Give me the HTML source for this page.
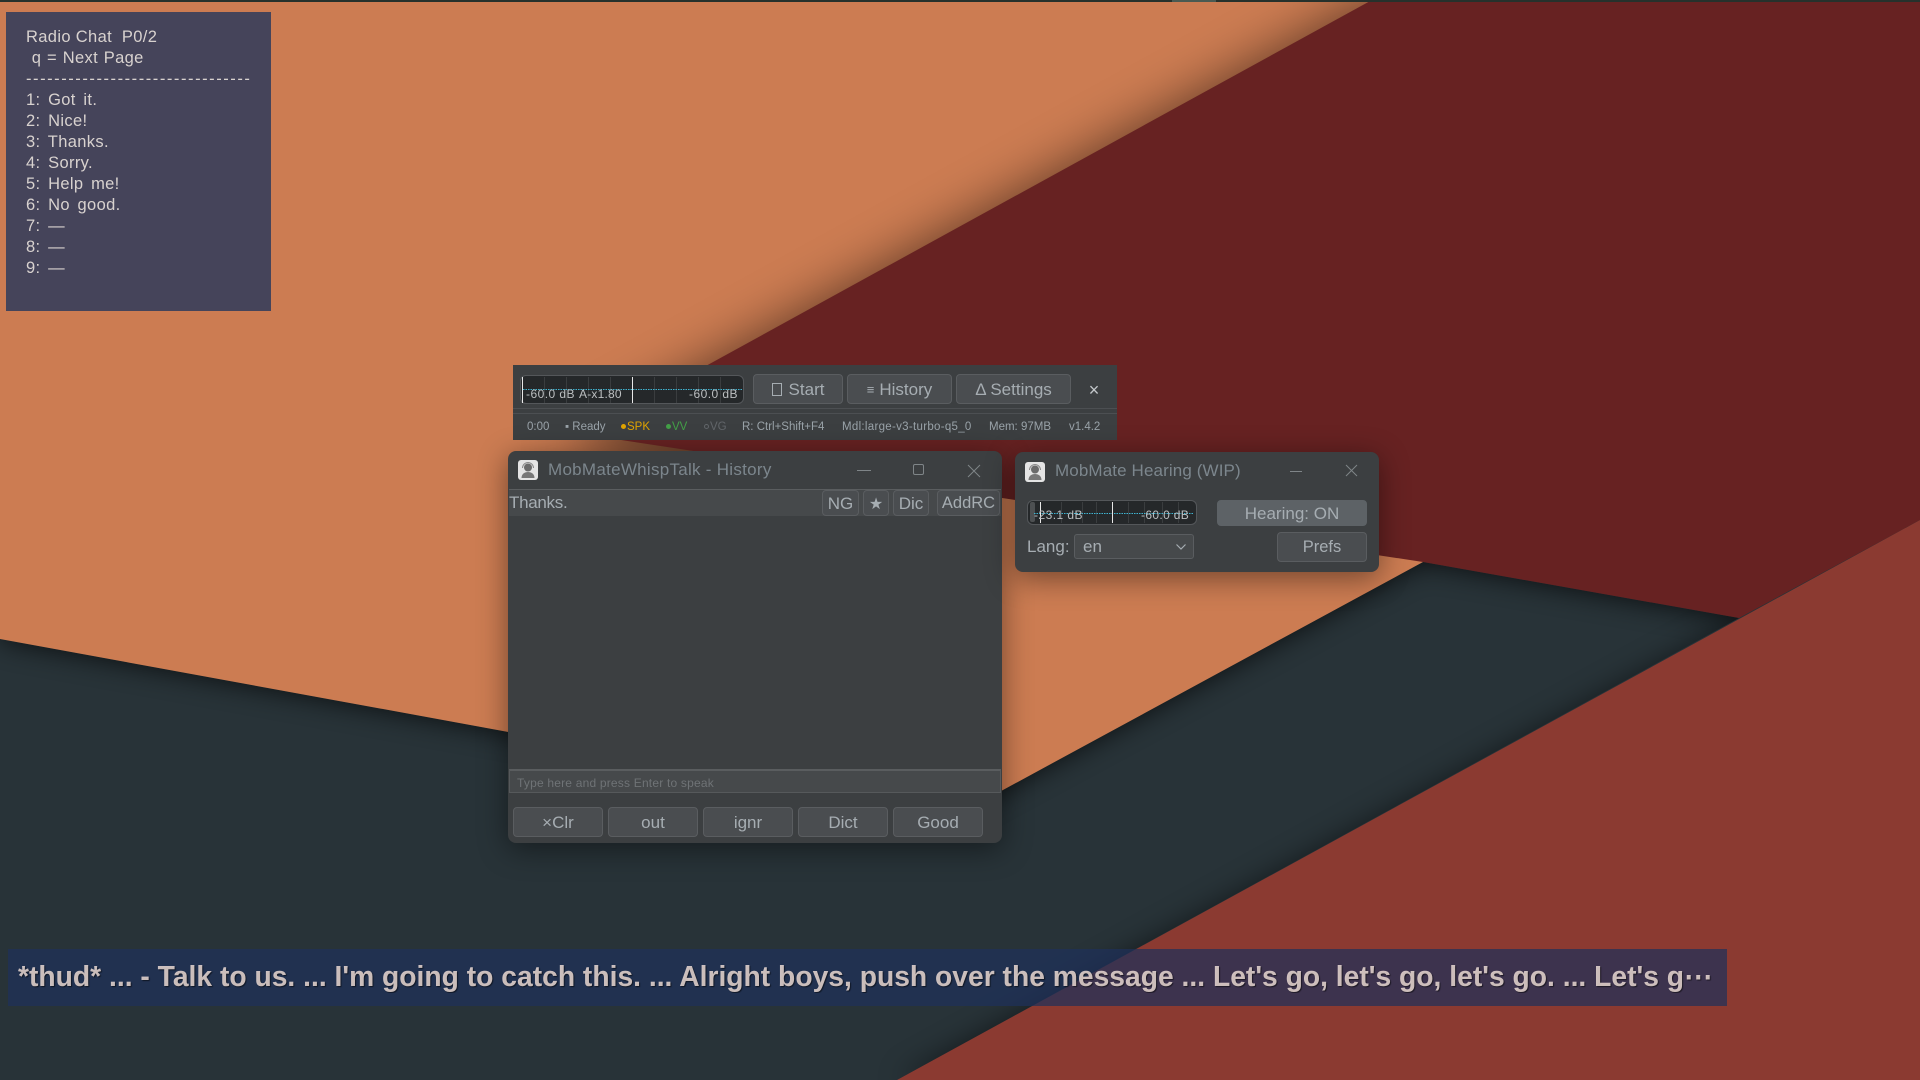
<!DOCTYPE html>
<html><head><meta charset="utf-8"><title>MobMate</title>
<style>
html,body{margin:0;padding:0;width:1920px;height:1080px;overflow:hidden;background:#283238}
body{position:relative;font-family:"Liberation Sans",sans-serif;color:#a6adb2}
.a{position:absolute;box-sizing:border-box;white-space:pre}
.bg{position:absolute;left:0;top:0}
.win{background:#3c3f41;border-radius:8px;box-shadow:0 6px 30px rgba(0,0,0,.45)}
.btn{background:#4a4d50;border:1px solid #5a5d60;border-radius:4px;text-align:center;color:#a6adb2;display:flex;align-items:center;justify-content:center;padding-top:1px}
.title{color:#7c868d;font-size:17px;line-height:20px}
.mt{background:#25282a;border:1px solid #54575a;border-radius:6px;overflow:hidden}
.st{font-size:11.5px;line-height:14px;top:420px;color:#9aa3a9}
.dot{display:inline-block;width:5px;height:5px;border-radius:50%;background:currentColor;margin-right:1px;vertical-align:1px;box-sizing:border-box}
.rl{left:26px;font-size:16.5px;line-height:21px;color:#d8d2cf;letter-spacing:.35px}
.li{word-spacing:2.7px}
.mtxt{font-size:12px;line-height:14px;color:#bcbfc1;letter-spacing:.45px}
</style></head><body>
<svg class="bg" width="1920" height="1080" viewBox="0 0 1920 1080">
<defs>
<filter id="b1" x="-20%" y="-20%" width="140%" height="140%"><feGaussianBlur stdDeviation="26"/></filter>
<filter id="b2" x="-20%" y="-20%" width="140%" height="140%"><feGaussianBlur stdDeviation="14"/></filter>
<clipPath id="slate"><polygon points="0,639 957,814 1423,562 1739,618 897,1080 0,1080"/></clipPath>
</defs>
<rect width="1920" height="1080" fill="#283338"/>
<g clip-path="url(#slate)">
<polygon points="0,639 957,814 1423,562 1920,650 1920,300 0,300" fill="#000" opacity=".75" filter="url(#b2)"/>
<polygon points="897,1080 1920,520 1920,1080" fill="#000" opacity=".5" filter="url(#b2)"/>
</g>
<polygon points="0,0 1400,0 1423,562 1003,790 957,814 0,639" fill="#cc7c52"/>
<polygon points="1372,0 560,446 800,500 1700,0" fill="#000" opacity=".55" filter="url(#b1)"/>
<polygon points="1372,0 1920,0 1920,520 1739,618 1423,562 582,434" fill="#672222"/>
<polygon points="897,1080 1920,520 1920,1080" fill="#8b3a31"/>
<rect x="0" y="0" width="1920" height="2" fill="#26312c"/>
<rect x="1172" y="0" width="44" height="2" fill="#4a5a52"/>
</svg>

<!-- Radio panel -->
<div class="a" style="left:6px;top:12px;width:265px;height:299px;background:#45445a"></div>
<div class="a rl" style="top:27px">Radio Chat  P0/2</div>
<div class="a rl" style="top:48px;word-spacing:.8px"> q = Next Page</div>
<div class="a rl" style="top:69px;letter-spacing:1.55px">--------------------------------</div>
<div class="a rl li" style="top:90px">1: Got it.</div>
<div class="a rl li" style="top:111px">2: Nice!</div>
<div class="a rl li" style="top:132px">3: Thanks.</div>
<div class="a rl li" style="top:153px">4: Sorry.</div>
<div class="a rl li" style="top:174px">5: Help me!</div>
<div class="a rl li" style="top:195px">6: No good.</div>
<div class="a rl li" style="top:216px">7: —</div>
<div class="a rl li" style="top:237px">8: —</div>
<div class="a rl li" style="top:258px">9: —</div>

<!-- Control bar -->
<div class="a" style="left:513px;top:365px;width:604px;height:75px;background:#3c3f41"></div>
<div class="a mt" style="left:520px;top:375px;width:224px;height:29px"></div>
<svg class="bg" width="1920" height="1080">
<g stroke="#3a3d3f" stroke-width="1">
<path d="M544.500 377V403M566.500 377V403M588.500 377V403M610.500 377V403M654.500 377V403M676.500 377V403M698.500 377V403M720.500 377V403"/>
</g>
<path d="M523 389.500H742" stroke="#3fb4d2" stroke-width="1" stroke-dasharray="1.500 1"/>
<path d="M522.500 377V403M632.500 377V403" stroke="#e8e8e8" stroke-width="1"/>
</svg>
<div class="a mtxt" style="left:526px;top:387px">-60.0 dB</div>
<div class="a mtxt" style="left:579px;top:387px;letter-spacing:.2px">A-x1.80</div>
<div class="a mtxt" style="left:689px;top:387px">-60.0 dB</div>
<div class="a btn" style="left:753px;top:374px;width:90px;height:30px;font-size:17px"><span style="display:inline-block;width:8px;height:11px;border:1px solid #a6adb2;margin-right:7px"></span>Start</div>
<div class="a btn" style="left:847px;top:374px;width:105px;height:30px;font-size:17px"><span style="font-size:13px;margin-right:5px">≡</span>History</div>
<div class="a btn" style="left:956px;top:374px;width:115px;height:30px;font-size:17px">Δ Settings</div>
<div class="a" style="left:1087px;top:381px;width:14px;height:18px;line-height:18px;font-size:18px;text-align:center;color:#c4c8cb">×</div>
<div class="a" style="left:513px;top:408px;width:604px;height:1px;background:#4c4f52"></div>
<div class="a" style="left:513px;top:413px;width:604px;height:1px;background:#4c4f52"></div>
<div class="a st" style="left:527px">0:00</div>
<div class="a st" style="left:565px">▪ Ready</div>
<div class="a st" style="left:621px;color:#e0a400"><span class="dot"></span>SPK</div>
<div class="a st" style="left:666px;color:#43a047"><span class="dot"></span>VV</div>
<div class="a st" style="left:704px;color:#62666a"><span class="dot" style="background:none;border:1px solid #62666a"></span>VG</div>
<div class="a st" style="left:742px">R: Ctrl+Shift+F4</div>
<div class="a st" style="left:842px;letter-spacing:.3px">Mdl:large-v3-turbo-q5_0</div>
<div class="a st" style="left:989px">Mem: 97MB</div>
<div class="a st" style="left:1069px">v1.4.2</div>

<!-- History window -->
<div class="a win" style="left:508px;top:451px;width:494px;height:392px"></div>
<svg class="bg" width="1920" height="1080">
<defs><g id="ic"><rect x="0" y="0" width="20" height="20" rx="3" fill="#e4e4e4"/><circle cx="10" cy="7.500" r="4" fill="#6a6a6a"/><path d="M3.500 18c0-4 3-6 6.500-6s6.500 2 6.500 6z" fill="#777"/><path d="M4.500 8a5.500 5.500 0 0 1 11 0" fill="none" stroke="#8a8a8a" stroke-width="1"/></g></defs>
<use href="#ic" x="518" y="460"/>
<g stroke="#7f8588" stroke-width="1" fill="none">
<path d="M857 470.500H871"/><rect x="913.500" y="464.500" width="10" height="10" rx="1.500"/><path d="M968 465L980 477M980 465L968 477"/>
</g>
</svg>
<div class="a title" style="left:548px;top:460px;letter-spacing:.28px">MobMateWhispTalk - History</div>
<div class="a" style="left:509px;top:489px;width:492px;height:27px;background:#46494b;border-top:1px solid #5a5d5f"></div>
<div class="a" style="left:509px;top:493px;font-size:17px;line-height:20px;color:#a6adb2;letter-spacing:-.3px">Thanks.</div>
<div class="a btn" style="left:822px;top:490px;width:37px;height:26px;font-size:17px">NG</div>
<div class="a btn" style="left:863px;top:490px;width:26px;height:26px;font-size:16px">★</div>
<div class="a btn" style="left:893px;top:490px;width:36px;height:26px;font-size:17px">Dic</div>
<div class="a btn" style="left:937px;top:490px;width:63px;height:26px;font-size:16.500px">AddRC</div>
<div class="a" style="left:509px;top:769px;width:492px;height:24px;background:#46494b;border-top:2px solid #5a5d5f;border-bottom:1px solid #56595b;border-left:1px solid #56595b;border-right:1px solid #56595b"></div>
<div class="a" style="left:517px;top:776px;font-size:12px;line-height:14px;color:#6f7376;letter-spacing:.2px">Type here and press Enter to speak</div>
<div class="a btn" style="left:513px;top:807px;width:90px;height:30px;font-size:17px">×Clr</div>
<div class="a btn" style="left:608px;top:807px;width:90px;height:30px;font-size:17px">out</div>
<div class="a btn" style="left:703px;top:807px;width:90px;height:30px;font-size:17px">ignr</div>
<div class="a btn" style="left:798px;top:807px;width:90px;height:30px;font-size:17px">Dict</div>
<div class="a btn" style="left:893px;top:807px;width:90px;height:30px;font-size:17px">Good</div>

<!-- Hearing window -->
<div class="a win" style="left:1015px;top:452px;width:364px;height:120px"></div>
<svg class="bg" width="1920" height="1080">
<use href="#ic" x="1025" y="462"/>
<g stroke="#7f8588" stroke-width="1" fill="none"><path d="M1290 471.500H1302"/><path d="M1346 465L1357 476M1357 465L1346 476"/></g>
</svg>
<div class="a title" style="left:1055px;top:461px;letter-spacing:.12px">MobMate Hearing (WIP)</div>
<div class="a mt" style="left:1027px;top:500px;width:170px;height:25px"></div>
<div class="a" style="left:1030px;top:502px;width:5px;height:20px;background:#4d5052;border-radius:2px"></div>
<svg class="bg" width="1920" height="1080">
<g stroke="#3a3d3f"><path d="M1061.500 502V523M1082.500 502V523M1096.500 502V523M1128.500 502V523M1144.500 502V523M1162.500 502V523M1178.500 502V523"/></g>
<path d="M1034 513.500H1193" stroke="#3fb4d2" stroke-dasharray="1.500 1"/>
<path d="M1040.500 502V523M1112.500 502V523" stroke="#e8e8e8"/>
</svg>
<div class="a mtxt" style="left:1034px;top:508px">-23.1 dB</div>
<div class="a mtxt" style="left:1141px;top:508px;letter-spacing:.35px">-60.0 dB</div>
<div class="a btn" style="left:1217px;top:500px;width:150px;height:26px;font-size:17px;background:#5d6266;border-color:#5d6266">Hearing: ON</div>
<div class="a" style="left:1027px;top:537px;font-size:17px;line-height:20px">Lang:</div>
<div class="a" style="left:1074px;top:534px;width:120px;height:25px;background:#46494b;border:1px solid #5a5d60;border-radius:3px;padding-left:8px;font-size:17px;line-height:24px">en</div>
<svg class="bg" width="1920" height="1080"><path d="M1176.500 544.500L1181 549L1185.500 544.500" fill="none" stroke="#a6adb2" stroke-width="1.200"/></svg>
<div class="a btn" style="left:1277px;top:532px;width:90px;height:30px;font-size:16.500px">Prefs</div>

<!-- Subtitle -->
<div class="a" style="left:8px;top:949px;width:1719px;height:57px;background:rgba(30,48,90,.72)"></div>
<div class="a" style="left:18px;top:959px;font-size:28.250px;line-height:34px;font-weight:bold;color:rgba(238,222,216,.84);text-shadow:1px 1px 1px rgba(0,0,0,.55);width:1700px;overflow:hidden">*thud* ... - Talk to us. ... I'm going to catch this. ... Alright boys, push over the message ... Let's go, let's go, let's go. ... Let's g⋯</div>
</body></html>
